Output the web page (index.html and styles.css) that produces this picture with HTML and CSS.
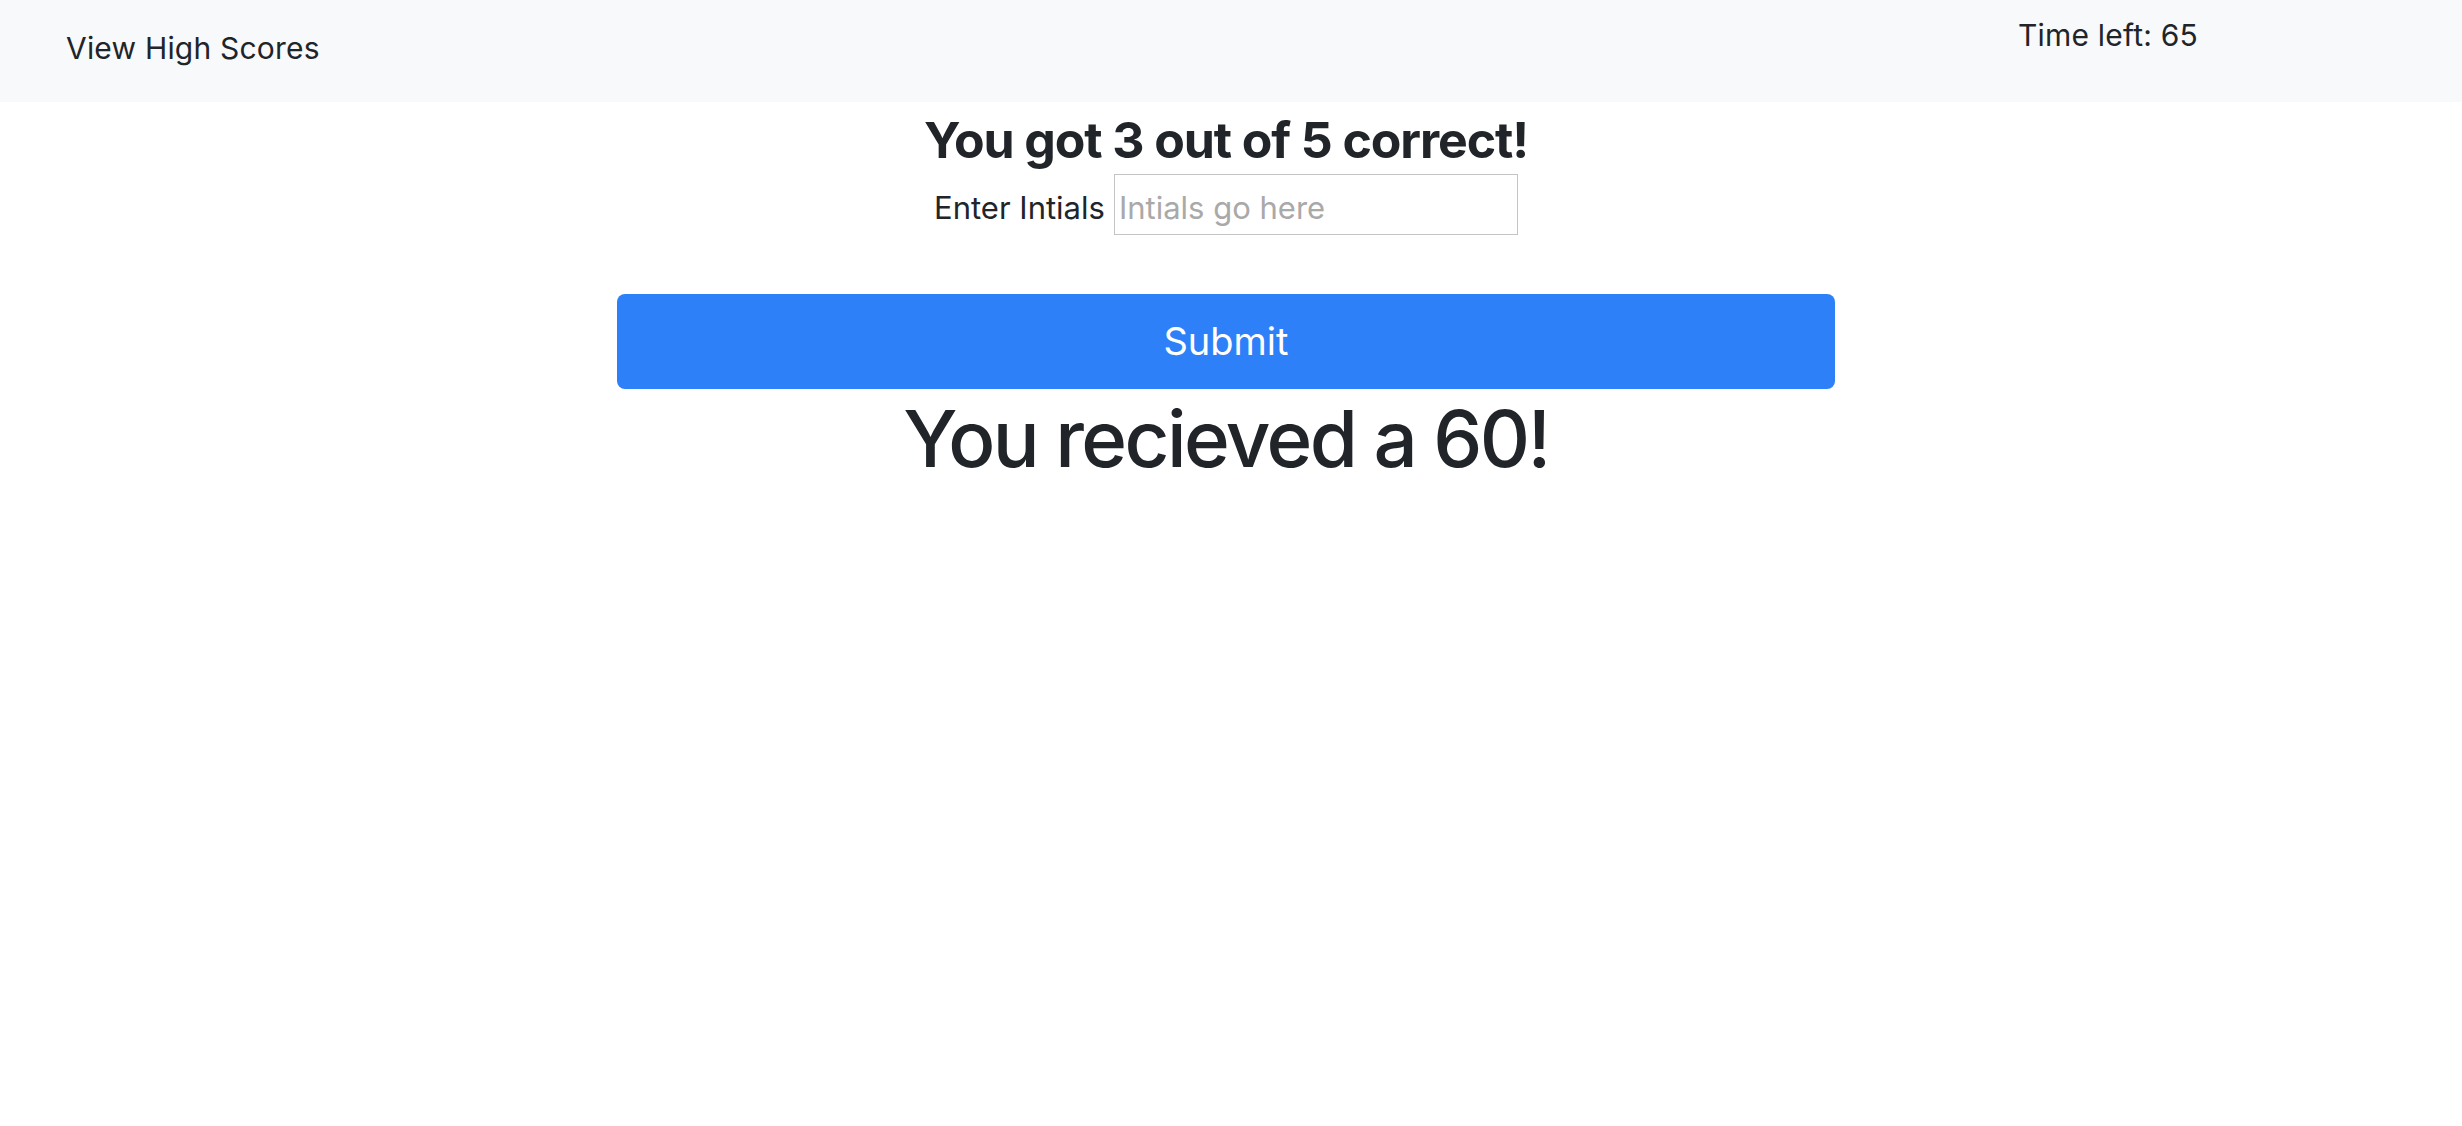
FILE: index.html
```html
<!DOCTYPE html>
<html lang="en">
<head>
<meta charset="utf-8">
<title>Quiz</title>
<link rel="stylesheet" href="styles.css">
</head>
<body>
<nav class="topbar">
  <a class="brand" href="#">View High Scores</a>
  <span class="timer">Time left: 65</span>
</nav>
<main class="result">
  <h3 class="score-title">You got 3 out of 5 correct!</h3>
  <div class="initials-row">
    <label class="initials-label" for="initials">Enter Intials</label>
    <input class="initials-input" id="initials" type="text" placeholder="Intials go here">
  </div>
  <button class="submit-btn" type="button">Submit</button>
  <h1 class="grade">You recieved a 60!</h1>
</main>
</body>
</html>
```

FILE: styles.css
```css
html, body {
  margin: 0;
  padding: 0;
  background: #ffffff;
}
body {
  font-family: Inter, "Noto Sans", "Liberation Sans", sans-serif;
  color: #212529;
}
.topbar {
  height: 102px;
  background: #f8f9fa;
  display: flex;
  align-items: flex-start;
  justify-content: space-between;
  padding: 0 264px 0 66px;
  box-sizing: border-box;
  font-size: 30px;
  line-height: 45px;
}
.brand {
  color: #212529;
  text-decoration: none;
  padding-top: 26px;
  letter-spacing: 0.2px;
}
.timer {
  padding-top: 13px;
  letter-spacing: 0.2px;
}
.result {
  display: flex;
  flex-direction: column;
  align-items: center;
  padding: 8px 10px 0 0;
}
.score-title {
  margin: 0;
  font-size: 50px;
  line-height: 60px;
  font-weight: 700;
  letter-spacing: -1.1px;
}
.initials-row {
  margin-top: 4px;
  display: flex;
  align-items: baseline;
  gap: 9px;
}
.initials-label {
  font-size: 31px;
  line-height: 46px;
}
.initials-input {
  box-sizing: border-box;
  width: 404px;
  height: 61px;
  padding: 5px 4px 0 4px;
  border: 1px solid #c4c4c4;
  border-radius: 0;
  font-family: inherit;
  font-size: 31px;
  color: #212529;
  outline: none;
}
.initials-input::placeholder {
  color: #a9a9a9;
}
.submit-btn {
  margin-top: 59px;
  width: 1218px;
  height: 95px;
  border: none;
  border-radius: 8px;
  background: #2e80f8;
  color: #ffffff;
  font-family: inherit;
  font-size: 38px;
  line-height: 1.2;
  cursor: pointer;
}
.grade {
  margin: 3px 0 0 0;
  font-size: 78px;
  line-height: 1.2;
  font-weight: 500;
  letter-spacing: -2.6px;
}
```
